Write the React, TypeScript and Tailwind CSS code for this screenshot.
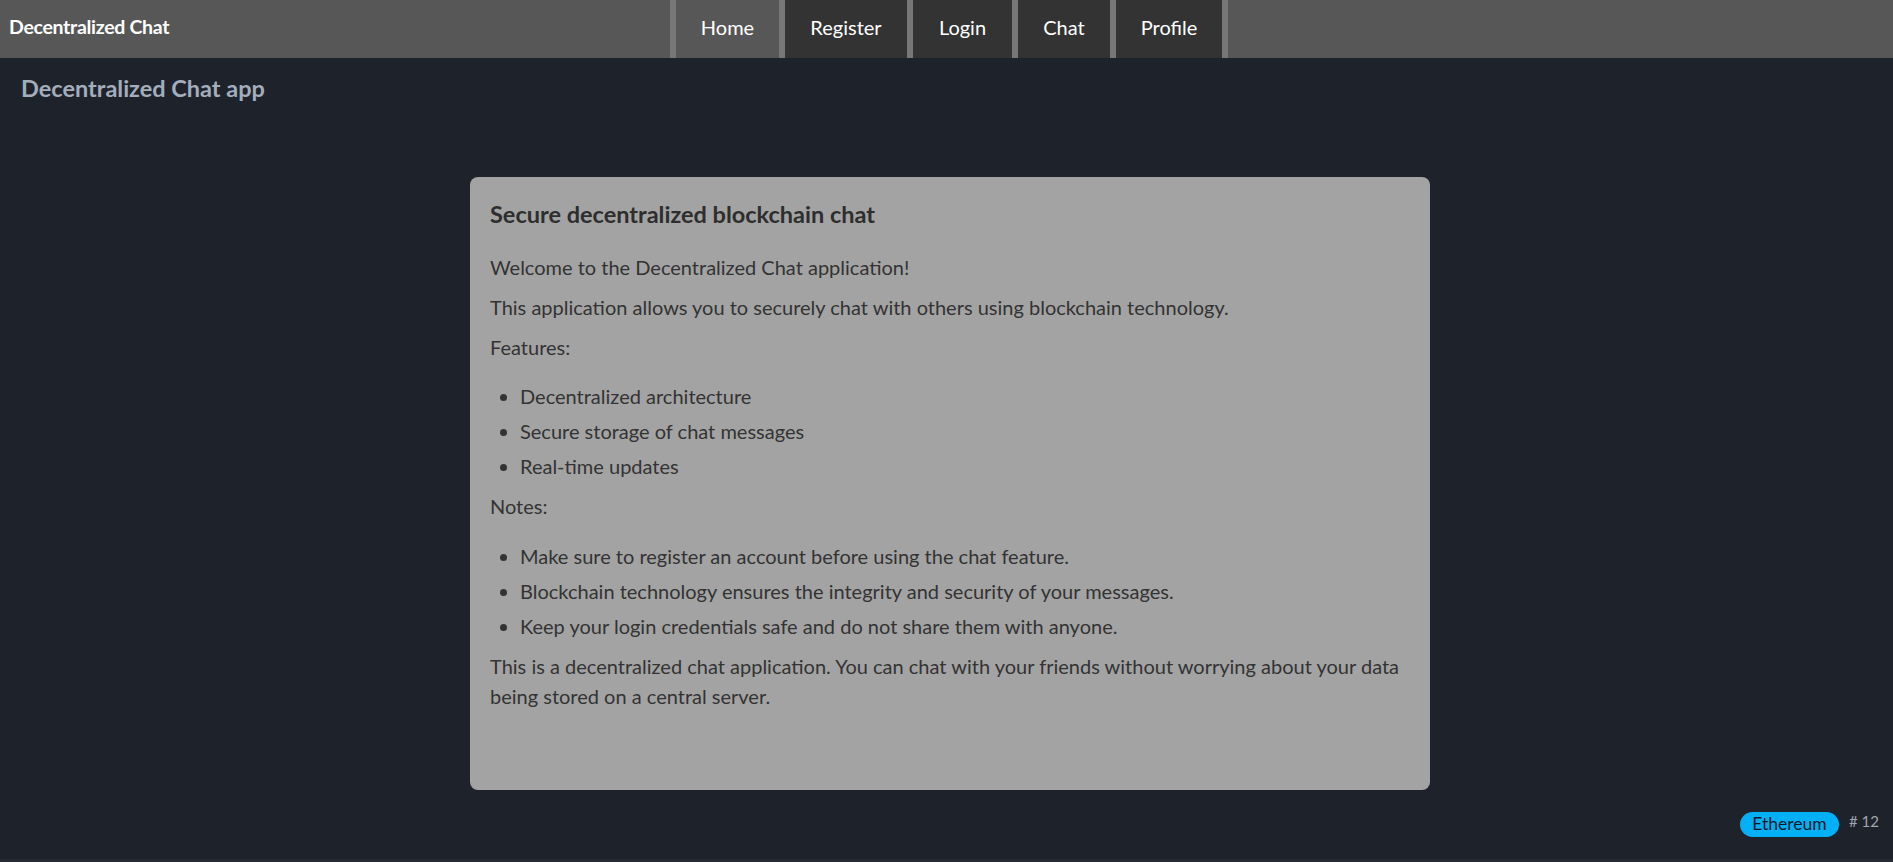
import React from 'react';

const links = [
    { label: 'Home', w: 'w-[103px]' },
    { label: 'Register', w: 'w-[122px]' },
    { label: 'Login', w: 'w-[99px]' },
    { label: 'Chat', w: 'w-[92px]' },
    { label: 'Profile', w: 'w-[106px]' },
];

const features = ['Decentralized architecture', 'Secure storage of chat messages', 'Real-time updates'];

const notes = [
    'Make sure to register an account before using the chat feature.',
    'Blockchain technology ensures the integrity and security of your messages.',
    'Keep your login credentials safe and do not share them with anyone.',
];

function NavBar() {
    return (
        <nav className="relative h-[58px] bg-[#575757] flex items-center">
            <span className="pl-[9px] pb-[4px] text-[19.5px] font-bold text-white tracking-[-0.3px]">Decentralized Chat</span>
            <ul className="absolute left-[670px] top-0 h-full flex gap-[6px] bg-[#777777] px-[6px]">
                {links.map((l, i) => (
                    <li
                        key={l.label}
                        className={`${l.w} h-full flex items-center justify-center pb-[5px] text-[20px] text-white ${i === 0 ? 'bg-[#575757]' : 'bg-[#333333]'}`}
                    >
                        {l.label}
                    </li>
                ))}
            </ul>
        </nav>
    );
}

export default function App() {
    return (
        <div className="min-h-[862px] bg-[#1e232b] flex flex-col" style={{ fontFamily: 'Lato, "Noto Sans", sans-serif' }}>
            <NavBar />

            <h1 className="mt-[15px] pl-[21px] text-[23.5px] leading-[30px] font-bold text-[#a3adbb]">Decentralized Chat app</h1>

            {/* Info card */}
            <section className="mt-[74px] ml-[470px] w-[960px] h-[613px] bg-[#a3a3a3] rounded-[8px] px-[20px] pt-[17px] flex flex-col text-[20px] leading-[30px] text-[#333333]">
                <h2 className="mt-[6px] text-[23.5px] leading-[28px] font-bold text-[#2e2e2e]">Secure decentralized blockchain chat</h2>
                <p className="mt-[24px]">Welcome to the Decentralized Chat application!</p>
                <p className="mt-[10px]">This application allows you to securely chat with others using blockchain technology.</p>
                <p className="mt-[10px]">Features:</p>
                <ul className="mt-[19px] flex flex-col gap-[5px] list-disc pl-[30px]">
                    {features.map((f) => (
                        <li key={f}>{f}</li>
                    ))}
                </ul>
                <p className="mt-[10px]">Notes:</p>
                <ul className="mt-[20px] flex flex-col gap-[5px] list-disc pl-[30px]">
                    {notes.map((n) => (
                        <li key={n}>{n}</li>
                    ))}
                </ul>
                <p className="mt-[10px]">
                    This is a decentralized chat application. You can chat with your friends without worrying about your data being stored on a central server.
                </p>
            </section>

            {/* Footer tag */}
            <div className="mt-[22px] flex justify-end items-center pr-[14px] gap-[10px]">
                <span className="h-[25px] w-[99px] rounded-full bg-[#03b0f5] flex items-center justify-center text-[17.5px] text-[#0b1a2b]">Ethereum</span>
                <span className="text-[15px] text-[#a0a6ae] -mt-[6px]"># 12</span>
            </div>
            <div className="mt-auto h-[3px] bg-[#262c36]" />
        </div>
    );
}
